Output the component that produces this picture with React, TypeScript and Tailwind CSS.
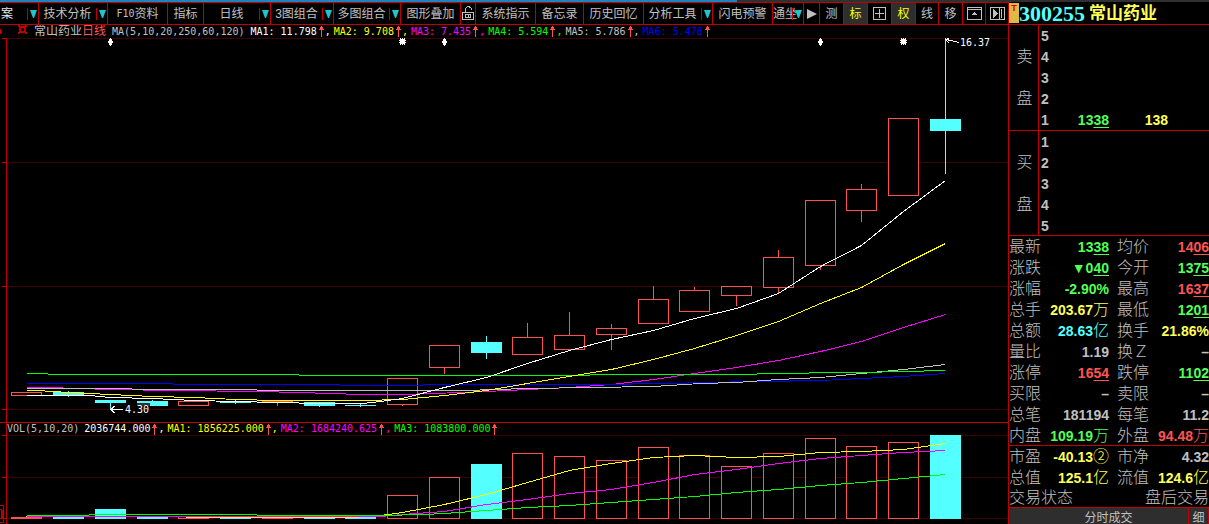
import React from "react";

const RED = "#ff5050";
const CYAN = "#54ffff";

/* ---------- toolbar ---------- */

function DropMark() {
  return (
    <span className="flex h-full shrink-0 items-center gap-[2px]">
      <span className="h-[12px] w-px bg-[#c00000]" />
      <svg className="h-[8px] w-[8px]" viewBox="0 0 8 8" aria-hidden="true">
        <path d="M0 0H7L4 8H3Z" fill="#1fc4cc" />
      </svg>
    </span>
  );
}

type ToolProps = {
  label?: string;
  title?: string;
  width: string;
  drop?: boolean;
  active?: boolean;
  last?: boolean;
  start?: boolean;
  children?: React.ReactNode;
};

function Tool({ label, title, width, drop, active, last, start, children }: ToolProps) {
  return (
    <button
      type="button"
      aria-label={title}
      className={`flex h-full shrink-0 items-center whitespace-nowrap border-[#c00000] text-[12px] leading-[20px] ${width} ${
        last ? "" : "border-r"
      } ${active ? "bg-[#2e2e2e] text-[#ffff00]" : "text-[#c0c0c0]"}`}
    >
      <span className={`flex min-w-0 flex-1 items-center ${start ? "justify-start" : "justify-center"}`}>
        {label}
        {children}
      </span>
      {drop && <DropMark />}
    </button>
  );
}

function Toolbar() {
  return (
    <nav className="flex h-[23px] overflow-hidden border-y border-[#c00000]">
      <button
        type="button"
        className="flex h-full w-[39px] shrink-0 items-center justify-between border-r border-[#c00000] text-[12px] leading-[20px] text-[#e8e8e8]"
      >
        <span className="pl-px">案</span>
        <DropMark />
      </button>
      <Tool label="技术分析" width="w-[69px]" drop />
      <Tool width="w-[60px]" title="F10资料">
        <span className="font-['DejaVu_Sans_Mono',monospace] text-[10px]">F10</span>资料
      </Tool>
      <Tool label="指标" width="w-[36px]" />
      <Tool label="日线" width="w-[67px]" drop />
      <Tool label="3图组合" width="w-[63px]" drop />
      <Tool label="多图组合" width="w-[67px]" drop />
      <Tool label="图形叠加" width="w-[60px]" />
      <Tool title="解锁" width="w-[15px]">
        <svg className="h-[15px] w-[12px]" viewBox="0 0 12 15" fill="none" stroke="#c0c0c0" shapeRendering="crispEdges" aria-hidden="true">
          <path d="M3.5 6V2.5L5.5 .5H7L9.5 2.5V4" />
          <path d="M.5 6.5H11.5V13.5H.5Z" />
          <path d="M3.5 8.5H8.5V11.5H3.5ZM6 9V12" />
        </svg>
      </Tool>
      <Tool label="系统指示" width="w-[60px]" />
      <Tool label="备忘录" width="w-[48px]" />
      <Tool label="历史回忆" width="w-[60px]" />
      <Tool label="分析工具" width="w-[69px]" drop />
      <Tool label="闪电预警" width="w-[60px]" />
      <Tool label="通坐" width="w-[31px]" drop start />
      <Tool title="播放" width="w-[16px]">
        <svg className="h-[10px] w-[10px]" viewBox="0 0 10 10" aria-hidden="true">
          <path d="M0 0L10 5L0 10Z" fill="#c0c0c0" />
        </svg>
      </Tool>
      <Tool label="测" width="w-[24px]" />
      <Tool label="标" width="w-[24px]" active />
      <Tool title="十字" width="w-[24px]">
        <svg className="h-[13px] w-[13px]" viewBox="0 0 13 13" fill="none" stroke="#c0c0c0" shapeRendering="crispEdges" aria-hidden="true">
          <path d="M.5 .5H12.5V12.5H.5ZM2 6.5H11M6.5 2V11" />
        </svg>
      </Tool>
      <Tool label="权" width="w-[24px]" active />
      <Tool label="线" width="w-[23px]" />
      <Tool label="移" width="w-[24px]" />
      <Tool title="展开" width="w-[23px]">
        <svg className="h-[13px] w-[15px]" viewBox="0 0 15 13" fill="none" stroke="#c0c0c0" shapeRendering="crispEdges" aria-hidden="true">
          <path d="M.5 .5H14.5V12.5H.5ZM1 2.5H14" />
          <path d="M4 8L7.500 5L11 8Z" fill="#c0c0c0" stroke="none" />
        </svg>
      </Tool>
      <Tool title="侧栏" width="w-[22px]" last>
        <svg className="h-[13px] w-[15px]" viewBox="0 0 15 13" fill="none" stroke="#c0c0c0" shapeRendering="crispEdges" aria-hidden="true">
          <path d="M.5 .5H14.5V12.5H.5ZM9.5 1V12" />
          <path d="M3 2L8 6.500L3 11Z" fill="#c0c0c0" stroke="none" />
          <path d="M11.5 2V11" />
        </svg>
      </Tool>
    </nav>
  );
}

/* ---------- indicator captions ---------- */

type Reading = { text: string; color: string };

const priceReadings: Reading[] = [
  { text: "MA1: 11.798", color: "text-[#ffffff]" },
  { text: "MA2: 9.708", color: "text-[#ffff00]" },
  { text: "MA3: 7.435", color: "text-[#ff00ff]" },
  { text: "MA4: 5.594", color: "text-[#00ff00]" },
  { text: "MA5: 5.786", color: "text-[#c0c0c0]" },
  { text: "MA6: 5.478", color: "text-[#0000ff]" },
];

const volumeReadings: Reading[] = [
  { text: "2036744.000", color: "text-[#ffffff]" },
  { text: "MA1: 1856225.000", color: "text-[#ffff00]" },
  { text: "MA2: 1684240.625", color: "text-[#ff00ff]" },
  { text: "MA3: 1083800.000", color: "text-[#00ff00]" },
];

function Readings({ items }: { items: Reading[] }) {
  return (
    <>
      {items.map((r, i) => (
        <span key={r.text} className={`flex shrink-0 items-center ${r.color}`}>
          {r.text}
          <svg className="h-[11px] w-[8px]" viewBox="0 0 8 11" shapeRendering="crispEdges" aria-hidden="true">
            <path d="M4 0H5V11H4ZM3 1H6V3H3ZM2 3H7V4H2Z" fill={RED} />
          </svg>
          <span className="w-[9px]">{i < items.length - 1 ? "," : ""}</span>
        </span>
      ))}
    </>
  );
}

/* ---------- charts ---------- */

type Candle = { x: number; o: number; c: number; hi?: number; lo?: number; up: boolean; vol: number };

// o and c are the top and bottom edges of the body; hi and lo the wick ends
const candles: Candle[] = [
  { x: 11, o: 392, c: 396, up: true, vol: 517 },
  { x: 53, o: 392, c: 396, hi: 391, lo: 397, up: false, vol: 517 },
  { x: 95, o: 400, c: 403, lo: 410, up: false, vol: 509 },
  { x: 137, o: 401, c: 406, hi: 400, up: false, vol: 516 },
  { x: 178, o: 401, c: 406, up: true, vol: 516 },
  { x: 220, o: 402, c: 403, hi: 400, lo: 404, up: false, vol: 517 },
  { x: 262, o: 401, c: 402, lo: 406, up: true, vol: 517 },
  { x: 304, o: 402, c: 406, lo: 407, up: false, vol: 517 },
  { x: 345, o: 405, c: 406, hi: 403, lo: 407, up: false, vol: 517 },
  { x: 387, o: 378, c: 405, lo: 406, up: true, vol: 495 },
  { x: 429, o: 345, c: 368, lo: 374, up: true, vol: 477 },
  { x: 471, o: 342, c: 353, hi: 336, lo: 359, up: false, vol: 464 },
  { x: 512, o: 337, c: 355, hi: 323, up: true, vol: 453 },
  { x: 554, o: 335, c: 350, hi: 312, up: true, vol: 456 },
  { x: 596, o: 328, c: 335, hi: 324, lo: 350, up: true, vol: 460 },
  { x: 638, o: 299, c: 324, hi: 286, up: true, vol: 447 },
  { x: 679, o: 290, c: 312, hi: 287, up: true, vol: 455 },
  { x: 721, o: 286, c: 296, lo: 306, up: true, vol: 466 },
  { x: 763, o: 257, c: 288, hi: 250, lo: 294, up: true, vol: 453 },
  { x: 805, o: 200, c: 266, lo: 270, up: true, vol: 438 },
  { x: 846, o: 189, c: 211, hi: 184, lo: 222, up: true, vol: 446 },
  { x: 888, o: 118, c: 196, up: true, vol: 442 },
  { x: 930, o: 119, c: 131, hi: 38, lo: 174, up: false, vol: 435 },
];

const priceLines = [
  { color: "#ff00ff", pts: "26,387 47,387 110,389 173,390 257,391 299,392 330,393 361,394 402,394 433,393 486,391 527,389 569,387 611,384 653,379 694,373 736,367 778,360 820,351 861,341 903,327 945,314" },
  { color: "#0000ff", pts: "26,383 172,383 173,384 339,384 340,385 422,385 423,384 589,384 674,383 700,382 820,380 861,378 903,376 945,373" },
  { color: "#c0c0c0", pts: "26,388 131,388 132,389 256,389 257,390 464,390 527,388 590,387 653,386 700,383 736,382 778,379 820,377 861,373 903,369 945,364" },
  { color: "#00ff00", pts: "26,373 47,373 48,374 298,374 299,375 589,375 590,374 756,374 757,373 861,372 945,370" },
  { color: "#ffff00", pts: "26,390 37,390 68,392 110,394 152,396 194,397 235,399 277,400 361,400 402,399 444,395 486,390 527,383 569,376 611,369 653,359 694,348 736,335 778,321 820,303 861,287 903,264 945,243" },
  { color: "#ffffff", pts: "26,395 89,395 110,397 152,398 194,400 235,401 277,402 319,403 361,403 372,402 402,398 444,387 486,377 527,363 569,350 611,339 653,330 694,318 736,308 778,293 820,266 861,245 903,211 945,180" },
];

const volumeLines = [
  { color: "#ffff00", pts: "26,516 340,517 373,516 402,512 444,504 486,494 527,482 569,470 611,463 653,457 694,455 736,457 778,456 820,452 861,451 903,449 945,443" },
  { color: "#ff00ff", pts: "26,516 380,516 402,514 444,511 486,504 527,499 569,493 611,489 653,482 694,474 736,469 778,463 820,458 861,455 903,452 945,450" },
  { color: "#00ff00", pts: "26,515 88,515 89,514 256,514 257,515 380,515 423,514 444,513 486,510 527,507 569,505 611,502 653,499 694,496 736,492 778,489 820,485 861,482 903,478 945,474" },
];

function Lines({ items }: { items: { color: string; pts: string }[] }) {
  return (
    <g transform="translate(.5 .5)" fill="none">
      {items.map((l) => (
        <polyline key={l.color} points={l.pts} stroke={l.color} />
      ))}
    </g>
  );
}

function Grid({ ys }: { ys: number[] }) {
  return (
    <>
      {ys.map((y) => (
        <g key={y}>
          <rect x="7" y={y} width="1001" height="1" fill="#400000" />
          <rect x="2" y={y} width="4" height="1" fill="#c00000" />
        </g>
      ))}
    </>
  );
}

function Box({ x, top, bottom, up }: { x: number; top: number; bottom: number; up: boolean }) {
  const h = bottom - top;
  if (!up || h < 3) return <rect x={x} y={top} width="31" height={h} fill={up ? RED : CYAN} />;
  return <rect x={x + 0.5} y={top + 0.5} width="30" height={h - 1} fill="#000" stroke={RED} />;
}

function Diamond({ x }: { x: number }) {
  return <path d={`M${x} 38h1v1h1v2h1v2h-1v2h-1v1h-1v-1h-1v-2h-1v-2h1v-2h1z`} fill="#fff" />;
}

function Burst({ x }: { x: number }) {
  return (
    <path
      d={`M${x - 2} 38h1v1h1v-1h1v1h1v-1h1v1h-1v1h2v1h-1v1h1v1h-2v1h1v1h-1v-1h-1v1h-1v-1h-1v1h-1v-1h1v-1h-2v-1h1v-1h-1v-1h2v-1h-1zM${x - 2} 39h5v5h-5z`}
      fill="#fff"
    />
  );
}

function PriceChart() {
  return (
    <svg className="block h-auto w-full" viewBox="0 38 1008 384" shapeRendering="crispEdges" role="img" aria-label="日线">
      <rect x="6" y="38" width="1" height="384" fill="#c00000" />
      <Grid ys={[38, 162, 286, 409]} />
      {candles.map((c) => (
        <g key={c.x}>
          <rect x={c.x + 15} y={c.hi ?? c.o} width="1" height={(c.lo ?? c.c) - (c.hi ?? c.o)} fill={c.up ? RED : CYAN} />
          <Box x={c.x} top={c.o} bottom={c.c} up={c.up} />
        </g>
      ))}
      <rect x="124" y="405" width="25" height="10" fill="#000" />
      <rect x="137" y="403" width="13" height="3" fill="#303030" />
      <Lines items={priceLines} />
      {[110, 444, 820].map((x) => (
        <Diamond key={x} x={x} />
      ))}
      {[402, 903].map((x) => (
        <Burst key={x} x={x} />
      ))}
      <path d="M111 409.500H123M114.500 406L111 409.500L114.500 413" stroke="#fff" fill="none" />
      <path d="M946 39.500L951 40.500L959 42.500M950 37L946 39.500L949 43" stroke="#fff" fill="none" />
      <rect x="959" y="38" width="32" height="1" fill="#000" />
      <g className="font-['DejaVu_Sans_Mono',monospace] text-[10px]" fill="#fff">
        <text x="125" y="413">4.30</text>
        <text x="960" y="46">16.37</text>
      </g>
    </svg>
  );
}

function VolumeChart() {
  return (
    <svg className="block h-auto w-full" viewBox="0 435 1008 89" shapeRendering="crispEdges" role="img" aria-label="VOL">
      <rect x="6" y="435" width="1" height="89" fill="#c00000" />
      <Grid ys={[435, 477, 518]} />
      {candles.map((c) => (
        <Box key={c.x} x={c.x} top={c.vol} bottom={519} up={c.up} />
      ))}
      <Lines items={volumeLines} />
      <path d="M0 505.500H3.500V522.500H0M0 509.500H1.500V518.500H0" stroke="#c00000" fill="none" />
      <rect x="2" y="510" width="2" height="8" fill="#c00000" />
    </svg>
  );
}

/* ---------- quote panel ---------- */

type Tone = "green" | "red" | "yellow" | "cyan" | "gray";

const tones: Record<Tone, string> = {
  green: "text-[#54ff54]",
  red: "text-[#ff5454]",
  yellow: "text-[#ffff54]",
  cyan: "text-[#54ffff]",
  gray: "text-[#c0c0c0]",
};

type Value = { main?: string; cents?: string; unit?: string; tone: Tone };

function Figure({ v }: { v: Value }) {
  return (
    <span className={`inline-flex items-center whitespace-nowrap text-[14px] leading-[20px] font-bold ${tones[v.tone]}`}>
      {v.main}
      {v.cents && <span className="underline decoration-1 underline-offset-[2px]">{v.cents}</span>}
      {v.unit && <span className="text-[16px] font-light">{v.unit}</span>}
    </span>
  );
}

type Row = [string, Value, string, Value];

const quoteRows: Row[] = [
  ["最新", { main: "13", cents: "38", tone: "green" }, "均价", { main: "14", cents: "06", tone: "red" }],
  ["涨跌", { main: "▼0", cents: "40", tone: "green" }, "今开", { main: "13", cents: "75", tone: "green" }],
  ["涨幅", { main: "-2.90%", tone: "green" }, "最高", { main: "16", cents: "37", tone: "red" }],
  ["总手", { main: "203.67", unit: "万", tone: "yellow" }, "最低", { main: "12", cents: "01", tone: "green" }],
  ["总额", { main: "28.63", unit: "亿", tone: "cyan" }, "换手", { main: "21.86%", tone: "yellow" }],
  ["量比", { main: "1.19", tone: "gray" }, "换Ｚ", { main: "–", tone: "gray" }],
  ["涨停", { main: "16", cents: "54", tone: "red" }, "跌停", { main: "11", cents: "02", tone: "green" }],
  ["买限", { main: "–", tone: "gray" }, "卖限", { main: "–", tone: "gray" }],
  ["总笔", { main: "181194", tone: "gray" }, "每笔", { main: "11.2", tone: "gray" }],
  ["内盘", { main: "109.19", unit: "万", tone: "green" }, "外盘", { main: "94.48", unit: "万", tone: "red" }],
];

const valuationRows: Row[] = [
  ["市盈", { main: "-40.13", unit: "②", tone: "yellow" }, "市净", { main: "4.32", tone: "gray" }],
  ["总值", { main: "125.1", unit: "亿", tone: "yellow" }, "流值", { main: "124.6", unit: "亿", tone: "yellow" }],
];

function QuoteTable({ rows }: { rows: Row[] }) {
  return (
    <table className="w-full table-fixed border-separate border-spacing-0 text-[16px] leading-[20px] text-[#c0c0c0]">
      <tbody>
        {rows.map(([a, av, b, bv]) => (
          <tr key={a} className="h-[21px]">
            <th scope="row" className="w-[33px] p-0 text-left font-light whitespace-nowrap">{a}</th>
            <td className="w-[67px] p-0"><div className="flex justify-end"><Figure v={av} /></div></td>
            <th scope="row" className="w-[40px] p-0 pl-[8px] text-left font-light whitespace-nowrap">{b}</th>
            <td className="p-0"><div className="flex justify-end"><Figure v={bv} /></div></td>
          </tr>
        ))}
      </tbody>
    </table>
  );
}

function BookTable({ side, levels, quote }: { side: string; levels: number[]; quote?: boolean }) {
  return (
    <table className="w-full table-fixed border-separate border-spacing-0 text-[14px] leading-[20px] font-bold text-[#c0c0c0]">
      <tbody>
        {levels.map((n, i) => (
          <tr key={n} className="h-[21px]">
            {i === 0 && (
              <th scope="rowgroup" rowSpan={5} className="w-[30px] border-r border-[#c00000] p-0 pl-[2px] text-[16px] leading-[42px] font-light">
                {side.split("").map((ch) => (
                  <span key={ch} className="block">{ch}</span>
                ))}
              </th>
            )}
            <td className="w-[20px] p-0 pl-[2px]">{n}</td>
            <td className="w-[50px] p-0">
              <div className="flex justify-end">{quote && n === 1 && <Figure v={{ main: "13", cents: "38", tone: "green" }} />}</div>
            </td>
            <td className="w-[59px] p-0 text-right text-[#ffff54]">{quote && n === 1 ? "138" : ""}</td>
            <td className="p-0" />
          </tr>
        ))}
      </tbody>
    </table>
  );
}

function QuotePanel() {
  return (
    <aside className="flex w-[201px] shrink-0 flex-col border-l border-[#c00000]">
      <header className="flex h-[23px] shrink-0 items-center border-b border-[#c00000]">
        <span className="flex h-[20px] w-[10px] justify-center bg-[#e0b848] text-[9px] leading-[10px] font-bold text-[#e00000]">T</span>
        <h1 className="flex items-center gap-[4px] pt-[2px] whitespace-nowrap">
          <span className="font-['Liberation_Serif',serif] text-[22px] leading-[22px] font-bold text-[#54ffff]">300255</span>
          <span className="text-[17px] leading-[20px] font-bold text-[#ffff54]">常山药业</span>
        </h1>
      </header>
      <div className="h-[106px] border-b border-[#c00000]">
        <BookTable side="卖盘" levels={[5, 4, 3, 2, 1]} quote />
      </div>
      <div className="h-[105px] overflow-hidden border-b border-[#c00000]">
        <BookTable side="买盘" levels={[1, 2, 3, 4, 5]} />
      </div>
      <div className="h-[210px] border-b border-[#c00000]">
        <QuoteTable rows={quoteRows} />
      </div>
      <div className="h-[62px] border-b border-[#c00000]">
        <QuoteTable rows={valuationRows} />
        <p className="flex justify-between text-[16px] leading-[20px] font-light text-[#c0c0c0]">
          <span>交易状态</span>
          <span>盘后交易</span>
        </p>
      </div>
      <div className="flex h-[16px] overflow-hidden bg-[#2e2e2e] text-[12px] leading-[20px] text-[#c0c0c0]">
        <button type="button" className="h-[20px] flex-1 pl-[20px]">分时成交</button>
        <button type="button" className="h-[20px] w-[21px] border-x border-[#c00000]">细</button>
      </div>
    </aside>
  );
}

export default function App() {
  return (
    <div className="flex min-h-screen flex-col overflow-hidden bg-black font-['Liberation_Sans','Noto_Sans_CJK_SC',sans-serif]">
      <div className="flex h-[2px] bg-[#303030]">
        <div className="w-[61%] bg-[#2080c0]" />
      </div>
      <div className="flex flex-1">
        <main className="min-w-0 flex-1">
          <Toolbar />
          <div className="flex h-[13px] items-center overflow-hidden font-['DejaVu_Sans_Mono','Noto_Sans_CJK_SC',monospace] text-[10px] leading-[13px] whitespace-pre">
            <svg className="h-[13px] w-[34px] shrink-0" viewBox="0 0 34 13" shapeRendering="crispEdges" aria-hidden="true">
              <path d="M0 4H1V5H2V8H1V9H0Z" fill="#c00000" />
              <path d="M18 0H20V1H25V0H27V2H26V7H27V9H25V8H20V9H18V7H19V2H18ZM21 3V6H24V3Z" fill="#c00000" fillRule="evenodd" />
            </svg>
            <span className="text-[12px] text-[#c0c0c0]">常山药业</span>
            <span className="text-[12px] text-[#ff5454]">日线</span>
            <span className="px-[6px] text-[#c0c0c0]">MA(5,10,20,250,60,120)</span>
            <Readings items={priceReadings} />
          </div>
          <PriceChart />
          <div className="border-t border-[#c00000]">
            <div className="ml-[6px] flex h-[12px] items-center overflow-hidden border-l border-[#c00000] font-['DejaVu_Sans_Mono',monospace] text-[10px] leading-[12px] whitespace-pre">
              <span className="pr-[5px] text-[#c0c0c0]">VOL(5,10,20)</span>
              <Readings items={volumeReadings} />
            </div>
          </div>
          <VolumeChart />
        </main>
        <QuotePanel />
      </div>
    </div>
  );
}
